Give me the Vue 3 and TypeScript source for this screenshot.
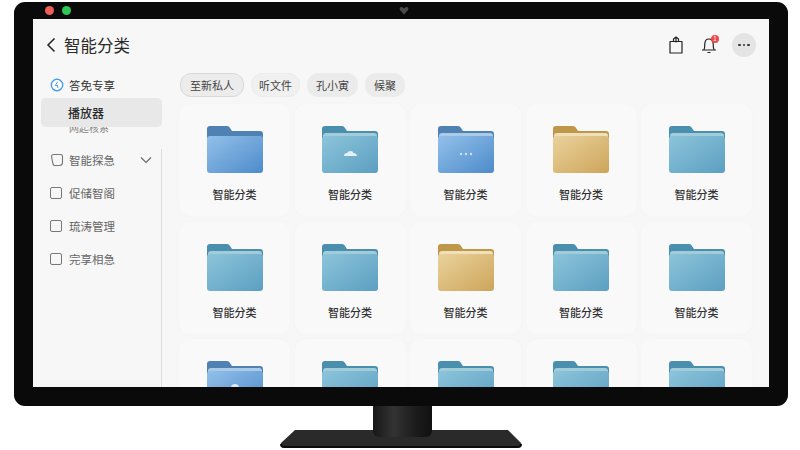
<script setup lang="ts">
type Kind = 'blue' | 'teal' | 'gold'
type Mark = '' | 'cloud' | 'dots' | 'disc'

interface Folder {
  kind: Kind
  mark?: Mark
  strip?: boolean
}

const navItems = ['促储智阁', '琉涛管理', '完享相急']
const chips = ['至新私人', '听文件', '孔小寅', '候聚']

const folders: Folder[] = [
  { kind: 'blue' },
  { kind: 'teal', mark: 'cloud', strip: true },
  { kind: 'blue', mark: 'dots', strip: true },
  { kind: 'gold', strip: true },
  { kind: 'teal', strip: true },
  { kind: 'teal', strip: true },
  { kind: 'teal', strip: true },
  { kind: 'gold', strip: true },
  { kind: 'teal', strip: true },
  { kind: 'teal', strip: true },
  { kind: 'blue', mark: 'disc', strip: true },
  { kind: 'teal', strip: true },
  { kind: 'teal', strip: true },
  { kind: 'teal', strip: true },
  { kind: 'teal', strip: true },
]
</script>

<template>
  <div class="page">
    <div class="monitor">
      <span class="dot red"></span>
      <span class="dot green"></span>
      <svg class="cam" width="10" height="9" viewBox="0 0 10 9"><path d="M5 8.500L1 4Q0 1.500 2 1 3.500.5 5 2.500 6.500.5 8 1q2 .5 1 3z" fill="#4a4a4a" /></svg>
      <div class="screen">
        <header class="top">
          <svg class="back" width="12" height="18" viewBox="0 0 12 18"><path d="M9.500 2.500L3 9l6.500 6.500" fill="none" stroke="#222" stroke-width="1.500" /></svg>
          <h1>智能分类</h1>
          <div class="actions">
            <svg width="14" height="18" viewBox="0 0 14 18">
              <path d="M1 5.500h12v11.500H1zM4.500 5.500V3L7 1l2.500 2v2.500M7 1.500v5" fill="none" stroke="#222" stroke-width="1.200" stroke-linejoin="round" />
            </svg>
            <div class="bell">
              <svg width="16" height="18" viewBox="0 0 16 18">
                <path d="M1 14h14M2.800 14c1-1.500 1-3 1-6 0-3 1.800-5 4.200-5s4.200 2 4.200 5c0 3 0 4.500 1 6M6.500 16.500h3" fill="none" stroke="#222" stroke-width="1.200" />
              </svg>
              <span class="badge">1</span>
            </div>
            <div class="more"><i></i><i></i><i></i></div>
          </div>
        </header>
        <div class="body">
          <aside class="side">
            <div class="row lead">
              <svg width="14" height="14" viewBox="0 0 14 14">
                <circle cx="7" cy="7" r="5.700" fill="#fff" stroke="#4a9bec" stroke-width="1.400" />
                <path d="M7.500 3.800L5.300 7.500h2.400V10" fill="none" stroke="#4a9bec" stroke-width="1" />
              </svg>
              <span>答免专享</span>
            </div>
            <div class="selected">播放器</div>
            <div class="clipped">网起核系</div>
            <div class="group">
              <div class="row first">
                <svg width="14" height="14" viewBox="0 0 14 14"><path d="M1.500 3.500q0-2 2-2h7q2 0 2 2v6q0 3-3 3h-5q-1 0-1.500-1.500z" fill="none" stroke="#777" stroke-width="1.100" /></svg>
                <span>智能探急</span>
                <svg class="chev" width="12" height="8" viewBox="0 0 12 8"><path d="M1 1.500l5 5 5-5" fill="none" stroke="#666" stroke-width="1.100" /></svg>
              </div>
              <div v-for="item in navItems" :key="item" class="row">
                <span class="box"></span>
                <span>{{ item }}</span>
              </div>
            </div>
          </aside>
          <main class="main">
            <div class="chips">
              <span v-for="(chip, i) in chips" :key="chip" class="chip" :class="{ on: i === 0, dim: i >= 2 }">{{ chip }}</span>
            </div>
            <div class="grid">
              <div v-for="(f, i) in folders" :key="i" class="card">
                <svg class="folder" :class="f.kind" width="58" height="49" viewBox="0 0 58 49">
                  <defs>
                    <linearGradient id="fill-blue" x1="0" y1="0" x2="1" y2="1">
                      <stop offset="0" stop-color="#93c0ea" />
                      <stop offset="1" stop-color="#4d8bca" />
                    </linearGradient>
                    <linearGradient id="fill-teal" x1="0" y1="0" x2="1" y2="1">
                      <stop offset="0" stop-color="#8cc4da" />
                      <stop offset="1" stop-color="#5c9fc1" />
                    </linearGradient>
                    <linearGradient id="fill-gold" x1="0" y1="0" x2="1" y2="1">
                      <stop offset="0" stop-color="#ead29c" />
                      <stop offset="1" stop-color="#cda55a" />
                    </linearGradient>
                  </defs>
                  <path class="tab" d="M1 4q0-3 3-3h17q2 0 3 2l2 3h28q3 0 3 3v12H1z" />
                  <path v-if="f.strip" class="strip" d="M2 11q0-3 3-3h48q3 0 3 3v6H2z" />
                  <path :fill="`url(#fill-${f.kind})`" d="M1 14q0-3 3-3h50q3 0 3 3v31q0 3-3 3H4q-3 0-3-3z" />
                  <path v-if="f.mark === 'cloud'" d="M23 31q0-3 3-3 1-2 3.500-2t3 2q3 0 3.500 3z" fill="#e3f0f5" />
                  <g v-if="f.mark === 'dots'" fill="#cfe2f4">
                    <circle cx="24" cy="29" r="1.200" />
                    <circle cx="29" cy="29" r="1.200" />
                    <circle cx="34" cy="29" r="1.200" />
                  </g>
                  <circle v-if="f.mark === 'disc'" cx="29" cy="28" r="4" fill="#dfe8f2" />
                </svg>
                <span v-if="i < 10" class="name">智能分类</span>
              </div>
            </div>
          </main>
        </div>
      </div>
    </div>
    <div class="neck"></div>
    <svg class="base" width="242" height="18" viewBox="0 0 242 18">
      <path d="M15 0H228L241 13q1 3-3 4H4q-4-1-3-4z" fill="#2a2a2a" />
      <path d="M1 14q0 3 3 3h234q3 0 3-3" fill="none" stroke="#0b0b0b" stroke-width="2" />
    </svg>
  </div>
</template>

<style scoped>
.page {
  width: 800px;
  height: 450px;
  overflow: hidden;
  background: #fff;
  display: flex;
  flex-direction: column;
  font-family: "Noto Sans CJK SC", "Noto Sans", sans-serif;
}
.monitor {
  position: relative;
  box-sizing: border-box;
  width: 774px;
  height: 404px;
  margin: 2px 0 0 14px;
  padding: 17px 19px 19px;
  background: #0a0a0a;
  border-radius: 11px;
  flex: none;
}
.dot {
  position: absolute;
  top: 4px;
  width: 9px;
  height: 9px;
  border-radius: 50%;
}
.red { left: 31px; background: #ee5f57; }
.green { left: 48px; background: #31c755; }
.cam { position: absolute; top: 4px; left: 385px; }
.screen {
  height: 100%;
  background: #f7f7f7;
  overflow: hidden;
  display: flex;
  flex-direction: column;
}
.top {
  height: 52px;
  flex: none;
  display: flex;
  align-items: center;
  padding: 0 13px 0 12px;
  color: #222;
}
.back { margin-right: 7px; }
h1 {
  margin: 0;
  font-size: 16.500px;
  font-weight: 400;
  color: #2a2a2a;
}
.actions {
  margin-left: auto;
  display: flex;
  align-items: center;
  gap: 15px;
}
.bell { position: relative; display: flex; margin-left: 3px; }
.badge {
  position: absolute;
  top: -1px;
  right: -2px;
  width: 8px;
  height: 8px;
  border-radius: 50%;
  background: #ea4a4a;
  color: #fff;
  font-size: 6px;
  line-height: 8px;
  text-align: center;
}
.more {
  width: 24px;
  height: 24px;
  border-radius: 50%;
  background: #e4e4e4;
  display: flex;
  align-items: center;
  justify-content: center;
  gap: 2px;
}
.more i {
  width: 2.500px;
  height: 2.500px;
  border-radius: 50%;
  background: #333;
}
.body {
  flex: 1;
  min-height: 0;
  display: flex;
}
.side {
  width: 130px;
  flex: none;
  display: flex;
  flex-direction: column;
  font-size: 11.500px;
  color: #666;
}
.row {
  display: flex;
  align-items: center;
  gap: 7px;
  height: 33px;
  padding-left: 17px;
}
.row svg, .box { flex: none; }
.lead {
  height: 27px;
  gap: 5px;
  color: #333;
}
.first { gap: 5px; margin-top: -6px; }
.selected {
  height: 29px;
  margin-left: 8px;
  width: 121px;
  box-sizing: border-box;
  padding-left: 27px;
  line-height: 29px;
  border-radius: 5px;
  background: #e8e8e8;
  color: #2b2b2b;
  font-size: 12px;
  font-weight: 500;
}
.clipped {
  height: 6px;
  overflow: hidden;
  padding-left: 36px;
  font-size: 10px;
  line-height: 2px;
  color: #888;
}
.group {
  flex: 1;
  margin-top: 16px;
  border-right: 1.500px solid #dcdcdc;
  margin-right: 1px;
}
.chev { margin-left: 20px; }
.box {
  width: 10px;
  height: 10px;
  border: 1.200px solid #777;
  border-radius: 2px;
}
.main {
  flex: 1;
  min-width: 0;
  padding: 2px 0 0 15px;
  overflow: hidden;
}
.chips {
  display: flex;
  gap: 7px;
  height: 23px;
  margin: 0 0 7px 2px;
}
.chip {
  height: 22px;
  line-height: 22px;
  padding: 0 7px;
  background: #f0f0f0;
  border: 1px solid #ececec;
  border-radius: 11px;
  font-size: 11px;
  color: #444;
}
.chip.dim { padding: 0 8px; background: #ebebeb; }
.chip.on {
  padding: 0 9px;
  background: #ececec;
  border-color: #d8d8d8;
}
.grid {
  display: grid;
  grid-template-columns: repeat(5, 113px);
  grid-auto-rows: 114px;
  gap: 3.500px 2.500px;
}
.card {
  box-sizing: border-box;
  background: #f9f9f9;
  border: 1px solid #f6f6f6;
  border-radius: 12px;
  display: flex;
  flex-direction: column;
  align-items: center;
  padding-top: 21px;
}
.folder { flex: none; }
.tab { fill: #4f82b3; }
.strip { fill: #a9cbe8; }
.teal .tab { fill: #4a8fae; }
.teal .strip { fill: #a3ccdb; }
.gold .tab { fill: #bf9748; }
.gold .strip { fill: #efe0bb; }
.name {
  margin-top: 12px;
  font-size: 11px;
  font-weight: 500;
  color: #333;
  line-height: 16px;
}
.neck {
  width: 59px;
  height: 31px;
  margin: 0 0 -7px 373px;
  flex: none;
  position: relative;
  z-index: 1;
  border-radius: 0 0 6px 6px;
  background: linear-gradient(90deg, #171717, #333 35%, #1d1d1d 70%, #101010);
}
.base {
  flex: none;
  margin-left: 280px;
}
</style>
